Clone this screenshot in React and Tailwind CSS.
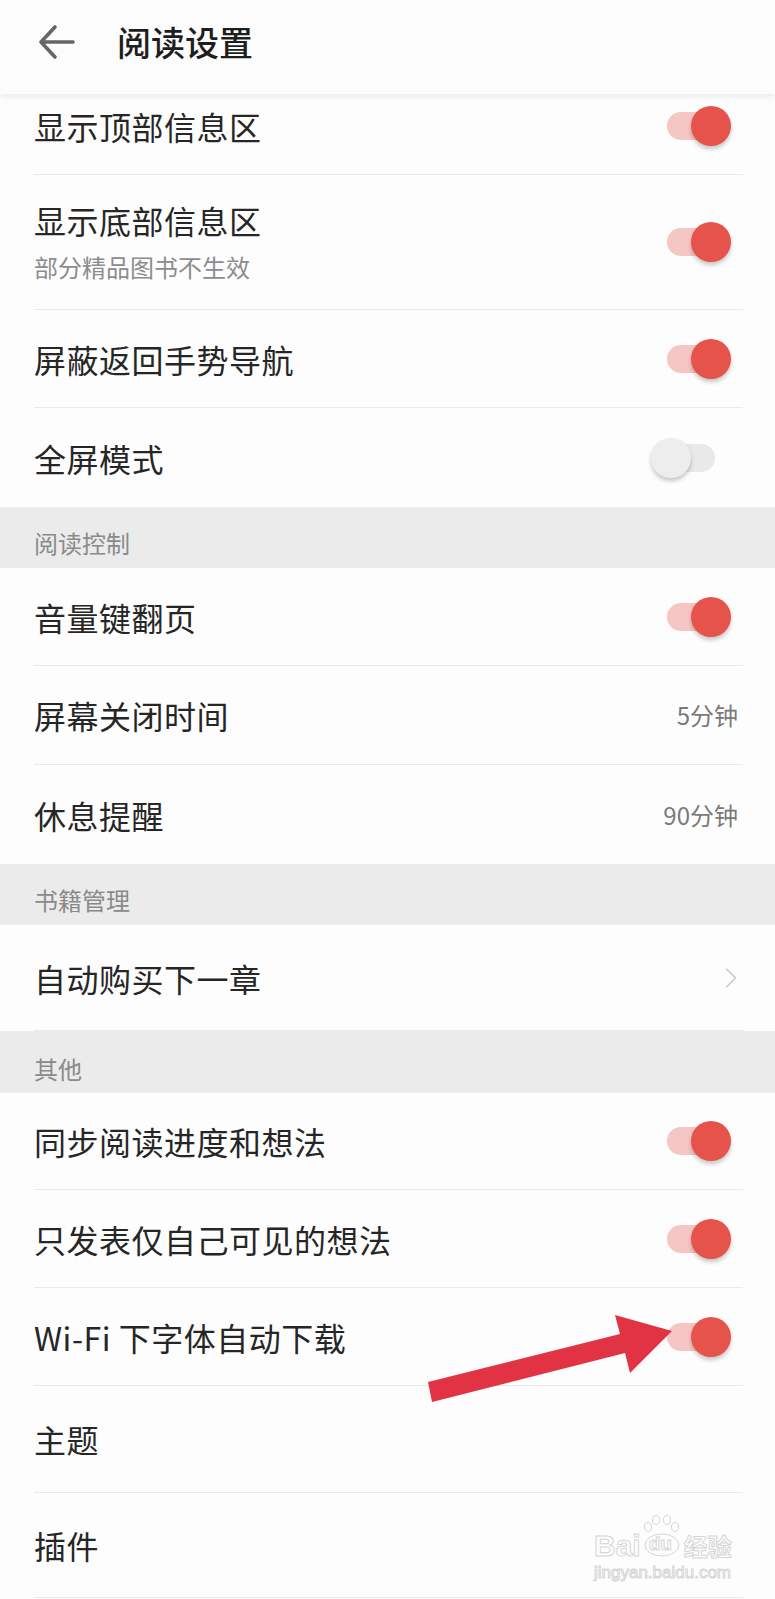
import React from "react";

const font = "font-['Noto_Sans_CJK_SC','Noto_Sans',sans-serif]";

function Toggle({ on }) {
  return (
    <div className="relative w-[80px] h-[42px] shrink-0 mr-[12px]">
      <div
        className={
          "absolute left-[16px] top-[7px] w-[48px] h-[28px] rounded-full " +
          (on ? "bg-[#f5c6c4]" : "bg-[#e9e9e9]")
        }
      />
      <div
        className={
          "absolute top-[1px] w-[40px] h-[40px] rounded-full shadow-[0_3px_4px_rgba(0,0,0,0.22)] " +
          (on ? "right-0 bg-[#e5534b]" : "left-0 bg-[#ededed]")
        }
      />
    </div>
  );
}

function Chevron() {
  return (
    <svg width="14" height="22" viewBox="0 0 14 22" className="mr-[5px] shrink-0">
      <path d="M2 1.5 L11.5 11 L2 20.5" fill="none" stroke="#c9c9c9" strokeWidth="1.6" />
    </svg>
  );
}

function Row({ title, sub, toggle, value, chevron, h = "h-[98px]", border = true, extra = "" }) {
  return (
    <div
      className={
        "flex items-center justify-between ml-[34px] mr-[32px] " +
        h +
        " " +
        extra +
        (border ? " border-b border-[#e9e9e9]" : "")
      }
    >
      <div className="flex flex-col">
        <span className="text-[32px] leading-[40px] tracking-[0.5px] text-[#262626]">{title}</span>
        {sub && <span className="mt-[9px] text-[24px] leading-[36px] text-[#8c8c8c]">{sub}</span>}
      </div>
      {toggle !== undefined && <Toggle on={toggle} />}
      {value && <span className="mr-[5px] text-[24px] leading-[32px] text-[#7a7a7a]">{value}</span>}
      {chevron && <Chevron />}
    </div>
  );
}

function Section({ label, h = "h-[61px]", pt = "pt-[20px]" }) {
  return (
    <div className={"bg-[#ebebeb] pl-[34px] " + h + " " + pt}>
      <span className="block text-[24px] leading-[32px] text-[#8a8a8a]">{label}</span>
    </div>
  );
}

// faint "Baidu 经验" watermark in the bottom corner
function Watermark() {
  const outline = "text-[#fdfdfd] [-webkit-text-stroke:1px_#d6d6d6]";
  return (
    <div className="absolute left-[594px] top-[1512px] flex flex-col pointer-events-none select-none">
      <div className="flex items-start">
        <span className={"mt-[18px] font-['Liberation_Sans',sans-serif] text-[30px] leading-[32px] font-bold " + outline}>
          Bai
        </span>
        <div className="relative mt-[2px] w-[42px] h-[44px] shrink-0">
          <svg width="42" height="44" viewBox="0 0 42 44">
            <g fill="#fdfdfd" stroke="#d6d6d6" strokeWidth="1">
              <ellipse cx="7" cy="13" rx="3.5" ry="4.5" />
              <ellipse cx="15" cy="6" rx="3.5" ry="4.5" />
              <ellipse cx="26" cy="6" rx="3.5" ry="4.5" />
              <ellipse cx="34" cy="13" rx="3.5" ry="4.5" />
              <ellipse cx="21" cy="31" rx="17" ry="11" />
            </g>
          </svg>
          <span className={"absolute left-[8px] top-[19px] font-['Liberation_Sans',sans-serif] text-[19px] leading-[22px] font-bold " + outline}>
            du
          </span>
        </div>
        <span className={"mt-[18px] ml-[1px] text-[24px] leading-[32px] font-bold " + outline}>经验</span>
      </div>
      <span className={"mt-[1px] font-['Liberation_Sans',sans-serif] text-[17px] leading-[20px] " + outline}>
        jingyan.baidu.com
      </span>
    </div>
  );
}

export default function App() {
  return (
    <div className={"relative w-[775px] h-[1599px] overflow-hidden bg-[#fdfdfd] " + font}>
      {/* header */}
      <div className="relative z-10 flex items-center h-[94px] pb-[10px] bg-[#fcfcfc] shadow-[0_3px_6px_rgba(0,0,0,0.07)]">
        <svg width="40" height="40" viewBox="0 0 40 40" className="ml-[37px] shrink-0">
          <path
            d="M36 20 H5 M18 5 L4 20 L18 35"
            fill="none"
            stroke="#666"
            strokeWidth="3.6"
            strokeLinecap="round"
            strokeLinejoin="round"
          />
        </svg>
        <span className="ml-[40px] text-[34px] leading-[44px] font-medium text-[#1e1e1e]">阅读设置</span>
      </div>

      <Row title="显示顶部信息区" toggle={true} h="h-[81px]" extra="pb-[17px]" />
      <Row title="显示底部信息区" sub="部分精品图书不生效" toggle={true} h="h-[135px]" />
      <Row title="屏蔽返回手势导航" toggle={true} />
      <Row title="全屏模式" toggle={false} h="h-[99px]" border={false} />

      <Section label="阅读控制" />
      <Row title="音量键翻页" toggle={true} />
      <Row title="屏幕关闭时间" value="5分钟" h="h-[99px]" />
      <Row title="休息提醒" value="90分钟" h="h-[99px]" border={false} />

      <Section label="书籍管理" />
      <Row title="自动购买下一章" chevron h="h-[106px]" />

      <Section label="其他" h="h-[62px]" pt="pt-[22px]" />
      <Row title="同步阅读进度和想法" toggle={true} h="h-[97px]" />
      <Row title="只发表仅自己可见的想法" toggle={true} />
      <Row title="Wi-Fi 下字体自动下载" toggle={true} />
      <Row title="主题" h="h-[107px]" />
      <Row title="插件" h="h-[105px]" />

      {/* annotation arrow drawn over the list */}
      <svg className="absolute left-0 top-0 pointer-events-none" width="775" height="1599" viewBox="0 0 775 1599">
        <polygon
          points="428,1382 620,1334 615,1315 672,1331 630,1373 625,1353 432,1402"
          fill="#e13343"
        />
      </svg>

      <Watermark />
    </div>
  );
}
